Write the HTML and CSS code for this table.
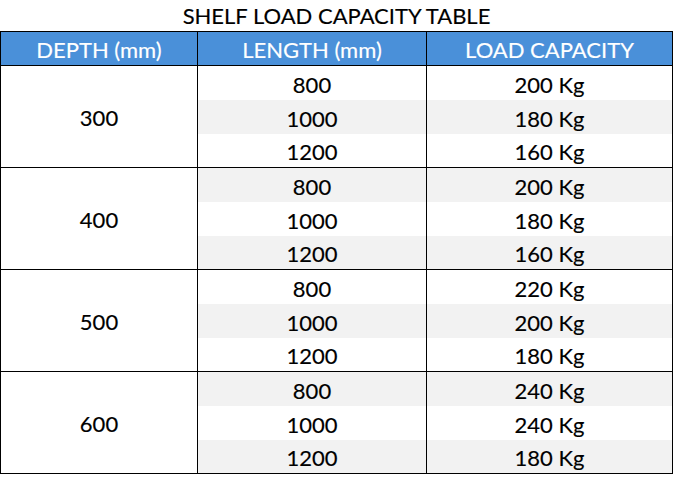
FILE: index.html
```html
<!DOCTYPE html>
<html>
<head>
<meta charset="utf-8">
<link rel="stylesheet" href="styles.css">
</head>
<body>
<div class="title">SHELF LOAD CAPACITY TABLE</div>
<div class="table">
  <div class="row head">
    <div class="cell">DEPTH (mm)</div>
    <div class="cell">LENGTH (mm)</div>
    <div class="cell">LOAD CAPACITY</div>
  </div>
  <div class="group">
    <div class="cell depth">300</div>
    <div class="cell">800</div><div class="cell">200 Kg</div>
    <div class="cell alt">1000</div><div class="cell alt">180 Kg</div>
    <div class="cell last">1200</div><div class="cell last">160 Kg</div>
  </div>
  <div class="group">
    <div class="cell depth">400</div>
    <div class="cell alt">800</div><div class="cell alt">200 Kg</div>
    <div class="cell">1000</div><div class="cell">180 Kg</div>
    <div class="cell alt last">1200</div><div class="cell alt last">160 Kg</div>
  </div>
  <div class="group">
    <div class="cell depth">500</div>
    <div class="cell">800</div><div class="cell">220 Kg</div>
    <div class="cell alt">1000</div><div class="cell alt">200 Kg</div>
    <div class="cell last">1200</div><div class="cell last">180 Kg</div>
  </div>
  <div class="group">
    <div class="cell depth">600</div>
    <div class="cell alt">800</div><div class="cell alt">240 Kg</div>
    <div class="cell">1000</div><div class="cell">240 Kg</div>
    <div class="cell alt last">1200</div><div class="cell alt last">180 Kg</div>
  </div>
</div>
</body>
</html>
```

FILE: styles.css
```css
html, body {
  margin: 0;
  padding: 0;
  background: #ffffff;
}
body {
  font-family: "Lato", "Roboto", sans-serif;
  color: #000000;
  width: 673px;
  -webkit-text-stroke: 0.15px currentColor;
}
.title {
  height: 31px;
  line-height: 32px;
  text-align: center;
  font-size: 22px;
}
.table {
  width: 673px;
  box-sizing: border-box;
  border-left: 1px solid #000000;
  border-top: 1px solid #000000;
  font-size: 22px;
}
.row, .group {
  display: grid;
  grid-template-columns: 197px 229px 246px;
}
.group {
  grid-template-rows: 34px 34px 34px;
}
.cell {
  box-sizing: border-box;
  height: 34px;
  border-right: 1px solid #000000;
  display: flex;
  align-items: center;
  justify-content: center;
  padding-top: 2px;
  background: #ffffff;
}
.head .cell {
  background: #4a90d9;
  color: #ffffff;
  border-bottom: 1px solid #000000;
}
.cell.alt {
  background: #f2f2f2;
}
.cell.last {
  border-bottom: 1px solid #000000;
}
.cell.depth {
  grid-row: 1 / 4;
  height: 102px;
  border-bottom: 1px solid #000000;
}
```
